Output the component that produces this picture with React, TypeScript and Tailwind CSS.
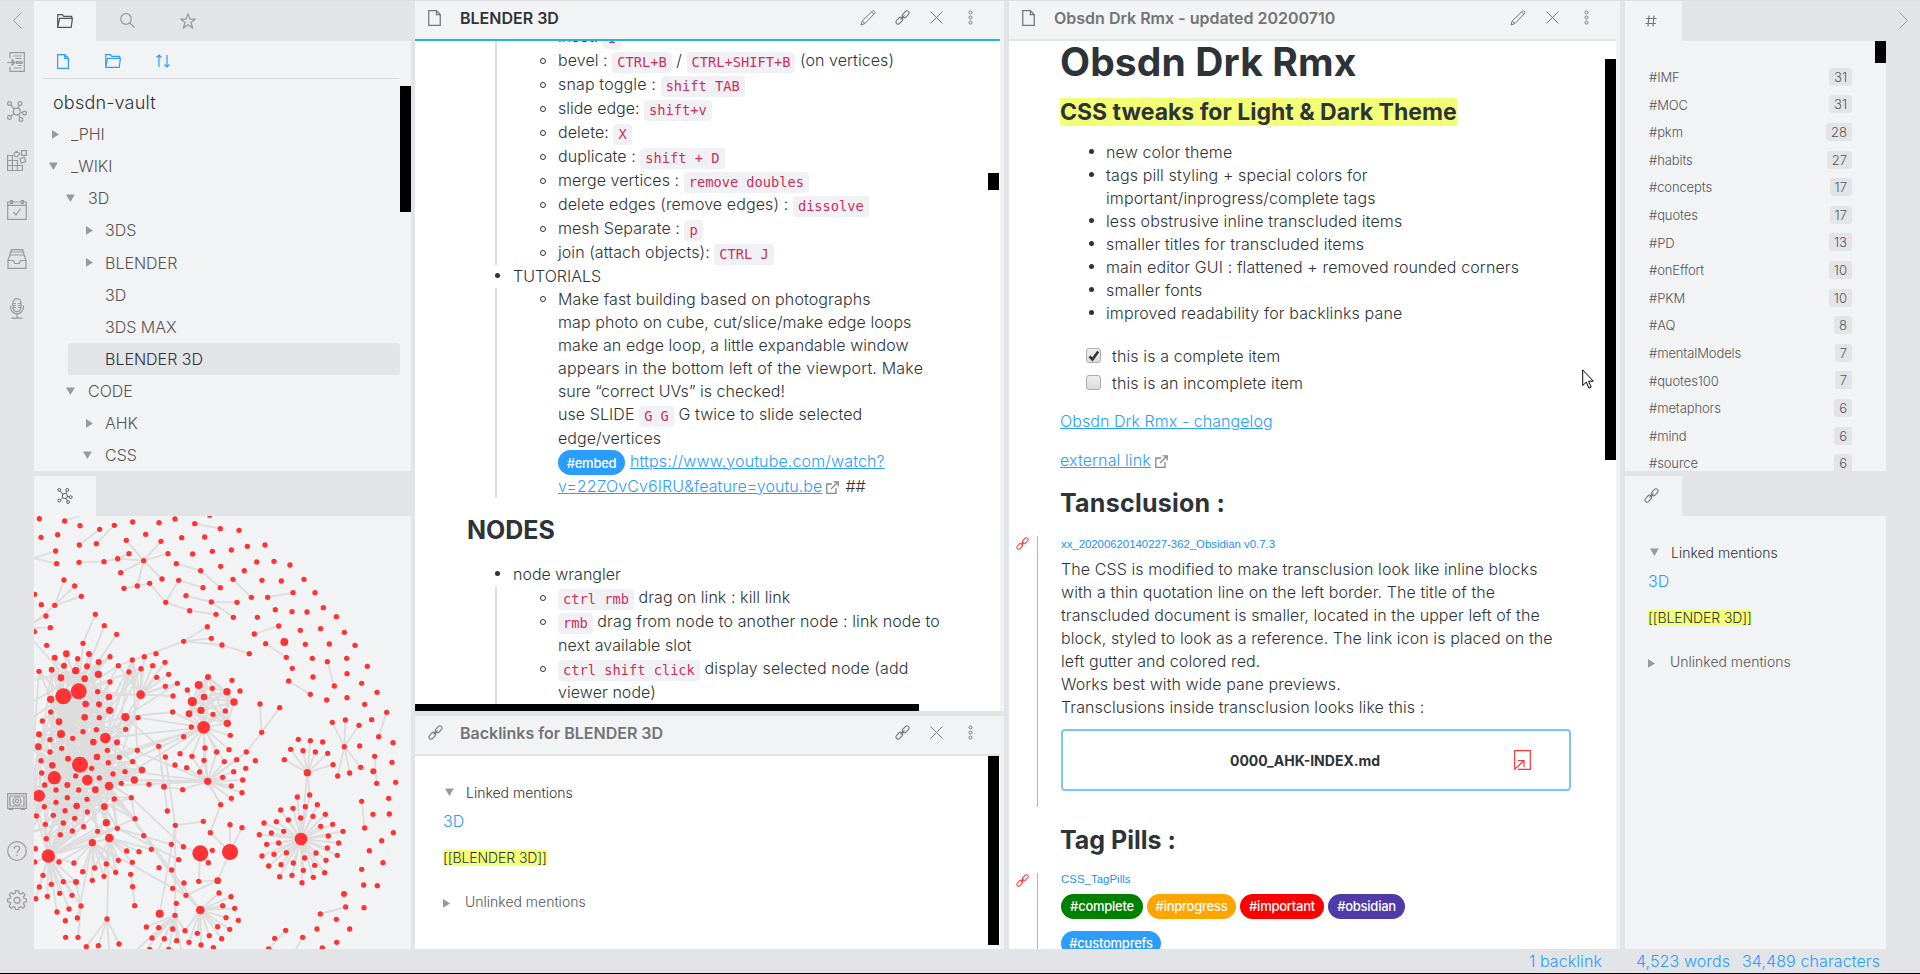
import React from "react";

/* ---------- icons ---------- */
type IconProps = { className?: string; children?: React.ReactNode; box?: string; sw?: number };
const Svg = ({ className = "", children, box = "0 0 20 20", sw = 1.2 }: IconProps) => (
  <svg viewBox={box} className={`block shrink-0 ${className}`} fill="none" stroke="currentColor" strokeWidth={sw}>
    {children}
  </svg>
);
const FolderIcon = ({ className = "" }) => (
  <Svg className={className} box="0 0 16 14">
    <path d="M.7 13.3V.7h4.8l1.2 1.6h8v2M.7 13.3 2.6 4.4h12.8l-1.2 8.9z" />
  </Svg>
);
const FileIcon = ({ className = "" }) => (
  <Svg className={className} box="0 0 12 15">
    <path d="M.6.6h7.2l3.6 3.7v10.1H.6zM7.8.6v3.7h3.6" />
  </Svg>
);
const LinkIcon = ({ className = "" }) => (
  <Svg className={className} box="0 0 15 15" sw={1.1}>
    <rect x="-3.9" y="-2.1" width="7.8" height="4.2" rx="2.1" transform="translate(10.7 4.3) rotate(-48)" />
    <rect x="-3.9" y="-2.1" width="7.8" height="4.2" rx="2.1" transform="translate(4.3 10.7) rotate(-48)" />
    <path d="M5.5 9.5l4-4" />
  </Svg>
);
const PencilIcon = ({ className = "" }) => (
  <Svg className={className} box="0 0 16 16" sw={1}>
    <path d="M1 15l1.2-4L12.6.9c.8-.8 3 1.300 2.300 2.200L5 13.500zM2.200 11l2.800 2.500M11.500 2l2.500 2.400" />
  </Svg>
);
const CrossIcon = ({ className = "" }) => (
  <Svg className={className} box="0 0 13 13" sw={1}>
    <path d="M.5.5l12 12M12.500.5l-12 12" />
  </Svg>
);
const DotsIcon = ({ className = "" }) => (
  <Svg className={className} box="0 0 5 15" sw={1}>
    <circle cx="2.5" cy="2.4" r="1.500" />
    <circle cx="2.5" cy="7.500" r="1.500" />
    <circle cx="2.5" cy="12.600" r="1.500" />
  </Svg>
);
const GraphIcon = ({ className = "" }) => (
  <Svg className={className} box="0 0 20 21">
    <circle cx="9.800" cy="10.500" r="3.400" />
    <circle cx="2.500" cy="2.500" r="1.900" />
    <circle cx="13" cy="2.500" r="1.900" />
    <circle cx="17.500" cy="12" r="1.900" />
    <circle cx="14" cy="18.500" r="1.900" />
    <circle cx="2.500" cy="16.500" r="1.900" />
    <path d="M3.900 4l3.400 4M12.300 4.300l-1.200 3M13.200 11l2.400.6M11.300 13.600l1.700 3M4 15.300l3.200-2.600" />
  </Svg>
);
const ExternalIcon = ({ className = "" }) => (
  <Svg className={className} box="0 0 13 13" sw={1.3}>
    <path d="M6 3H.8v9.300H10V7M7.500.8h4.700v4.700M12 1L5 8" />
  </Svg>
);
const Tri = ({ open, className = "" }: { open?: boolean; className?: string }) => (
  <svg viewBox="0 0 9 9" className={`block size-[9px] shrink-0 ${className}`} fill="#999">
    <path d={open ? "M0 .5h8.800L4.400 8z" : "M1 0l7 4.400L1 8.800z"} />
  </svg>
);

const ribbonTop = [
  <Svg className="size-5">
    <path d="M3 6V.7h14.300v18.600H3V15M6.500 4h8M8.500 6.500h6M6.500 16h8M11 13.500h3.500M0 10.500h7M5 7.800l3 2.700-3 2.700zM9.500 9.500h2v2h-2zM13 9.500h2v2h-2z" />
  </Svg>,
  <GraphIcon className="h-[21px] w-5" />,
  <Svg className="h-[21px] w-5" box="0 0 20 21">
    <path d="M.6 5.500h4.800v15H.6zM.6 10.500h9.800v10M.6 15.500h14.800v5H.6M10.400 15.500v-5M7 3.600L9.500 1.200l3.200 2.400-2.400 3.200-2.900-.8zM14.500.7h4.900v4.700h-4.900zM12.800 8.500l4.600-1.200 1.200 4.500-4.600 1.300z" />
  </Svg>,
  <Svg className="size-5">
    <path d="M.7 2h18.600v17.300H.7zM.7 5.300h18.600M3.500.5h2v3h-2zM14.500.5h2v3h-2zM6.500 12l2.500 3 4.500-6.500" />
  </Svg>,
  <Svg className="size-5">
    <path d="M1 11.500h5.500l1.200 3h4.600l1.200-3H19v7.800H1zM1 11.500L2.800 6h14.400l1.800 5.500M3.300 5.500V3h13.400v2.500M4.300 2.500V.7h11.400v1.800" />
  </Svg>,
  <Svg className="h-[21px] w-5" box="0 0 20 21">
    <rect x="6" y=".7" width="8" height="13" rx="4" />
    <path d="M3.700 7.500v2.300a6.300 6 0 0 0 12.600 0V7.500M10 16v3.500M4.500 20.200h11M6 5.500h3M11 5.500h3M6 7.500h3M11 7.500h3M6 9.500h3M11 9.500h3" />
  </Svg>,
];
const ribbonBottom = [
  <Svg className="h-[17px] w-5" box="0 0 20 17">
    <path d="M.7.7h18.600v14.600H.7zM3 3h14v10H3zM2.500 15.500v1h3v-1M14.500 15.500v1h3v-1" />
    <circle cx="10" cy="8" r="4" />
    <circle cx="10" cy="8" r="1.700" />
  </Svg>,
  <Svg className="size-5">
    <circle cx="10" cy="10" r="9.300" />
    <path d="M7.300 7.800c0-3.800 5.400-3.600 5.400-.3 0 2-2.700 2.300-2.700 4.500M10 13.500v1.600" />
  </Svg>,
  <Svg className="size-5">
    <path d="M8.400.8h3.200l.4 2.500 1.700.8 2.200-1.600 2.100 2.200-1.500 2.100.7 1.700 2.300.4v2.900l-2.400.5-.7 1.600 1.500 2.200-2.100 2.100-2.200-1.500-1.600.7-.5 2.300H8.500l-.5-2.400-1.600-.6-2.200 1.500-2.100-2.100 1.500-2.200-.7-1.600-2.300-.5V8.900l2.400-.4.700-1.700-1.500-2.100 2.100-2.200 2.100 1.600 1.600-.8z" />
    <circle cx="10" cy="10.300" r="3" />
  </Svg>,
];

/* ---------- graph ---------- */
type P = [number, number, number?];
const hubs: Record<string, P> = {
  a: [190, 679, 24], b: [236, 664, 24], c: [316, 804, 16], d: [240, 884, 24], e: [163, 923, 20], f: [262, 930, 16],
  g: [117, 977, 18], h: [145, 1158, 20], i: [422, 674, 13], j: [611, 772, 19], k: [577, 695, 14], l: [623, 934, 11],
  m: [601, 1150, 24], n: [690, 1146, 24], o: [903, 1107, 19], p: [922, 908, 11], q: [601, 1320, 13], r: [479, 1331, 12],
  s: [328, 1104, 13], t: [277, 1118, 11], u: [431, 272, 8], v: [1033, 830, 8], w: [327, 948, 13], x: [376, 741, 12],
  y: [853, 516, 12], z: [525, 1336, 8],
};
const small =
  "118,146 194,153 240,167 299,178 343,166 398,156 477,158 525,147 584,161 661,176 717,181 629,136 123,202 173,194 238,225 289,221 379,211 437,193 483,214 545,203 614,201 742,229 795,225 167,243 170,281 237,277 312,275 353,266 387,251 504,251 578,252 637,244 694,240 770,276 822,274 870,285 362,308 529,281 602,302 662,289 733,302 486,327 372,355 412,348 449,340 536,331 609,353 661,353 699,328 786,331 844,333 912,328 192,330 224,348 244,379 164,406 104,373 124,404 138,438 151,473 497,397 558,377 634,396 711,397 754,382 803,382 879,368 945,368 569,422 648,433 700,442 772,442 826,419 876,425 921,426 970,413 1009,440 286,433 313,467 350,493 249,520 622,470 634,505 551,514 666,525 748,551 763,492 836,468 901,481 962,476 1033,487 797,521 859,562 916,523 988,522 1065,526 937,565 982,575 1040,565 1102,589 877,595 866,633 931,673 939,621 1003,648 1041,611 1085,640 1131,667 980,690 1041,683 1094,703 1160,727 997,757 1036,750 1077,766 1115,749 1136,800 1079,828 1082,892 1049,909 1013,918 1179,818 1124,859 1130,940 1176,877 1187,937 1166,985 1085,994 1119,1033 1168,1032 1094,1074 1180,1088 1145,1112 1108,1142 1149,1178 1085,1198 1091,1245 1132,1247 1092,1313 1037,1311 961,1332 1009,1348 1049,1377 951,1377 1010,1417 908,1402 857,1381 824,1405 967,1434 806,1437 780,702 839,713 785,787 140,526 330,560 355,587 387,606 397,570 433,560 468,551 458,587 495,577 423,596 506,613 470,622 496,649 532,640 519,678 562,660 637,655 696,631 720,663 676,723 639,733 518,726 574,771 551,800 691,796 615,834 476,829 496,861 540,851 576,859 650,846 687,839 739,846 612,871 673,875 710,869 766,872 525,885 560,893 599,906 737,895 701,905 668,922 728,930 694,948 726,968 694,985 662,1004 548,959 117,604 330,636 293,665 152,726 127,753 298,743 414,743 377,778 249,785 289,779 218,805 150,809 185,835 150,846 322,841 358,862 325,878 412,841 398,875 275,895 227,918 298,924 339,912 375,905 364,940 447,943 394,983 343,987 261,988 202,983 168,960 134,945 236,960 168,997 133,1010 195,1022 109,1038 160,1036 224,1045 262,1026 136,1063 190,1059 251,1070 217,1083 293,1084 181,1094 139,1106 352,1075 405,1046 431,1097 380,1143 417,1145 454,1138 355,1171 397,1177 319,1182 347,1207 312,1219 284,1194 277,1231 248,1205 222,1179 177,1176 129,1216 154,1243 118,1251 142,1279 190,1235 179,1270 216,1276 207,1317 171,1326 243,1308 232,1344 196,1352 197,1402 234,1402 107,1286 104,1176 106,1136 259,1430 295,1427 321,1347 357,1422 392,1213 398,1250 404,1307 502,1023 526,1066 610,1054 631,1088 514,1123 550,1130 637,1141 625,1178 690,1064 726,1073 536,1169 477,1193 515,1200 518,1255 552,1239 558,1276 596,1234 529,1300 657,1269 693,1280 668,1307 704,1315 678,1343 715,1351 653,1370 689,1378 628,1397 592,1390 665,1406 603,1425 567,1417 640,1433 555,1382 518,1377 530,1412 476,1373 493,1406 456,1404 439,1371 449,1438 506,1438 895,808 931,812 968,816 872,838 909,842 946,846 983,850 853,869 999,884 892,981 929,975 842,1020 879,1015 916,1010 952,1004 829,1055 865,1050 902,1044 939,1039 976,1033 792,1059 998,1063 962,1069 814,1089 851,1084 778,1094 1029,1084 985,1098 800,1123 836,1119 1016,1119 982,1134 786,1158 822,1153 859,1148 948,1149 1012,1156 914,1164 978,1171 806,1188 843,1184 880,1179 944,1186 910,1201 974,1208 839,1220 876,1216 940,1222 906,1238 233,566 125,909 123,872 103,485";
const medium: P[] = [
  [164, 563, 9], [199, 551, 10], [267, 552, 9], [192, 587, 9], [155, 599, 9], [227, 602, 11], [261, 589, 9], [296, 576, 9],
  [295, 613, 11], [183, 623, 10], [254, 626, 10], [152, 688, 11], [327, 681, 10], [257, 702, 10], [297, 703, 9], [329, 721, 11],
  [254, 742, 10], [177, 755, 10], [183, 792, 12], [117, 793, 9], [115, 830, 10], [280, 816, 10], [351, 817, 9], [291, 861, 10],
  [204, 866, 9], [157, 886, 10], [426, 900, 10], [403, 930, 11], [286, 959, 10], [202, 945, 9], [230, 1008, 10], [313, 1010, 10],
  [319, 1058, 11], [492, 950, 9], [596, 645, 12], [624, 621, 9], [681, 665, 11], [612, 681, 10], [702, 696, 11], [603, 721, 11],
  [567, 731, 10], [682, 760, 11], [1120, 904, 9], [1032, 1272, 9], [653, 1232, 10], [228, 1236, 9],
];
const smallPts: P[] = small.split(" ").map((s) => s.split(",").map(Number) as unknown as P);
const lines =
  "194,153 240,138;299,178 238,225;343,166 289,221;584,161 661,176;237,277 312,275;312,275 353,266;353,266 387,251;353,266 431,272;379,211 431,272;483,214 431,272;504,251 431,272;362,308 431,272;486,327 431,272;412,348 431,272;372,355 412,348;412,348 449,340;449,340 497,397;497,397 536,331;536,331 609,353;497,397 569,422;569,422 648,433;529,281 602,302;602,302 661,353;558,377 634,396;634,396 711,397;634,396 700,442;699,328 754,382;803,382 879,368;167,243 102,265;170,281 102,265;192,330 164,406;224,348 164,406;244,379 164,406;164,406 102,458;138,438 102,458;151,473 102,474;286,433 249,520;249,520 236,664;313,467 236,664;350,493 236,664;622,470 551,514;634,505 551,514;551,514 666,525;666,525 748,551;551,514 355,587;763,492 836,468;797,521 859,562;866,633 931,673;982,575 1003,648;780,702 785,787;839,713 785,787;785,787 739,846;739,846 623,934;1160,727 1136,800;1124,859 1130,940;1085,994 1094,1074;1037,1311 961,1332;857,1381 806,1437;908,1402 888,1437;1033,830 997,757;1033,830 1036,750;1033,830 1077,766;1033,830 1013,918;1033,830 1049,909;1033,830 1082,892;922,908 903,1107;922,908 929,975;690,1146 690,1064;690,1146 726,1073;690,1146 631,1088;690,1146 653,1232;601,1150 550,1130;601,1150 625,1178;601,1150 596,1234;596,1234 653,1232;653,1232 558,1276;526,1066 610,1054;526,1066 479,1331;623,934 662,1004;662,1004 631,1088;502,1023 476,829;526,1066 496,861;492,950 476,829;398,1250 404,1307;392,1213 398,1250;394,983 550,1130;328,1104 321,1347;321,1347 259,1430;321,1347 295,1427;321,1347 357,1422;321,1347 327,1437;492,950 548,959;612,871 599,906;422,674 330,960;328,948 558,1276;328,948 601,1320;277,1118 558,1276;525,1336 412,1437;525,1336 440,1437;525,1336 476,1437;525,1336 543,1437;526,1066 525,1336;228,1236 243,1308;228,1236 190,1235;394,983 405,1046;352,1075 514,1123;352,1075 536,1169;328,1104 454,1138;277,1118 232,1344;243,1308 234,1402;104,630 236,600;102,740 190,679;102,515 236,664;102,960 230,1100";
const fan: [string, (p: P) => boolean][] = [
  ["o", (p) => Math.hypot(p[0] - 903, p[1] - 1107) < 138],
  ["p", (p) => Math.hypot(p[0] - 922, p[1] - 908) < 102 && p[1] < 890],
  ["q", (p) => Math.hypot(p[0] - 601, p[1] - 1320) < 118 && p[1] > 1260 && p[0] > 550],
  ["i", (p) => Math.hypot(p[0] - 422, p[1] - 674) < 130 && p[1] < 680 && p[0] > 350],
  ["l", (p) => Math.hypot(p[0] - 623, p[1] - 934) < 110 && p[0] > 540],
  ["j", (p) => Math.hypot(p[0] - 611, p[1] - 772) < 125],
  ["h", (p) => p[0] < 245 && p[1] > 1160 && p[1] < 1330],
  ["t", (p) => Math.hypot(p[0] - 277, p[1] - 1118) < 118 && p[1] > 1150],
  ["s", (p) => Math.hypot(p[0] - 328, p[1] - 1104) < 125 && p[1] > 1130],
  ["z", (p) => Math.hypot(p[0] - 515, p[1] - 1370) < 90 && p[1] > 1290 && p[0] < 560],
  ["b", (p) => Math.hypot(p[0] - 236, p[1] - 664) < 130],
  ["d", (p) => p[0] < 430 && p[1] > 690 && p[1] < 1110],
];

function GraphView() {
  const all: P[] = [...smallPts, ...medium];
  const dense = [...all, ...Object.values(hubs)].filter((p) => p[0] < 430 && p[1] > 540 && p[1] < 1110);
  const segs: number[][] = lines.split(";").map((s) => s.split(/[ ,]/).map(Number));
  fan.forEach(([k, test]) => all.filter(test).forEach((p) => segs.push([hubs[k][0], hubs[k][1], p[0], p[1]])));
  const centres = ["a", "b", "c", "d", "e", "f", "g", "w"];
  dense.forEach((p, i) => {
    [i % 8, (i * 3 + 1) % 8].forEach((n) => {
      const q = hubs[centres[n]];
      segs.push([p[0], p[1], q[0], q[1]]);
    });
    const r = dense[(i * 37 + 11) % dense.length];
    if (i % 2 && Math.hypot(p[0] - r[0], p[1] - r[1]) < 300) segs.push([p[0], p[1], r[0], r[1]]);
    if (i % 5 === 0) segs.push([p[0], p[1], 90, 700 + ((i * 53) % 400)]);
  });
  dense.forEach((p) => p[1] > 1000 && segs.push([p[0], p[1], 145, 1158]));
  const ring = medium.filter((p) => p[0] > 560 && p[0] < 710 && p[1] < 770);
  ring.forEach((p, i) => ring.slice(i + 1).forEach((r) => segs.push([p[0], p[1], r[0], r[1]])));
  ["c", "d", "w", "f", "e"].forEach((k) => segs.push([hubs[k][0], hubs[k][1], 611, 772], [hubs[k][0], hubs[k][1], 623, 934]));
  segs.push([376, 741, 518, 726], [376, 741, 532, 640], [376, 741, 476, 829], [376, 741, 422, 674], [414, 743, 611, 772]);
  return (
    <svg viewBox="102 138 1131 1299" className="block h-[433px] w-[377px]">
      <g stroke="#dddddd" strokeWidth="5.500">
        {segs.map((s, i) => (
          <line key={i} x1={s[0]} y1={s[1]} x2={s[2]} y2={s[3]} />
        ))}
      </g>
      <g fill="#ff3333">
        {[...all, ...Object.values(hubs)].map((p, i) => (
          <circle key={i} cx={p[0]} cy={p[1]} r={p[2] ?? 8} />
        ))}
      </g>
    </svg>
  );
}

/* ---------- text parts ---------- */
const Code = ({ children }: { children: React.ReactNode }) => (
  <code className="inline-block h-[21px] rounded-[4px] bg-[#f1f1f5] px-[5px] align-middle font-['DejaVu_Sans_Mono',monospace] text-[13.7px] leading-[21px] tracking-normal text-[#cc3058]">
    {children}
  </code>
);
const Pill = ({ children, className }: { children: React.ReactNode; className: string }) => (
  <span className={`inline-flex h-[25px] items-center justify-center rounded-full text-[13px] font-medium tracking-[-0.25px] text-white ${className}`}>{children}</span>
);
const Sub = ({ children, h = "h-6", dot = true, track = "tracking-[0.07px]" }: { children: React.ReactNode; h?: string; dot?: boolean; track?: string }) => (
  <div className={`flex items-center whitespace-pre ${h} ${track}`}>
    <span className="ml-[43px] mr-[11px] flex size-[7px] shrink-0 items-center">
      {dot && <span className="size-[6px] rounded-full border border-[#2e3338]" />}
    </span>
    <div className="leading-[22px]">{children}</div>
  </div>
);
const row = "h-[23px] pb-[2px]";
const Top = ({ children }: { children: React.ReactNode }) => (
  <div className="flex h-[23px] items-center whitespace-pre pb-[2px]">
    <span className="ml-[80px] mr-[13px] size-[5px] rounded-full bg-[#2e3338]" />
    {children}
  </div>
);
const Mentions = ({ className = "" }) => (
  <div className={`text-[14px] ${className}`}>
    <div className="flex h-5 items-center">
      <Tri open className="ml-[2px] mr-[12px]" />
      <span className="text-[#2e3338]">Linked mentions</span>
    </div>
    <div className="mt-[9px] flex h-5 items-center text-base text-[#2a9dff]">3D</div>
    <div className="mt-[19px] flex h-[17px]">
      <span className="h-4 bg-[#f4ff78] leading-[16px] tracking-[-0.1px] text-[#2e3338]">[[BLENDER 3D]]</span>
    </div>
    <div className="mt-[24px] flex h-5 items-center text-[#555]">
      <Tri className="mr-[14px] mt-[5px] -ml-px" />
      <span>Unlinked mentions</span>
    </div>
  </div>
);
const tree: [string, number, string, string][] = [
  ["_PHI", 0, "closed", "ml-[17px]"],
  ["_WIKI", 0, "open", "ml-[15px]"],
  ["3D", 1, "open", "ml-[32px]"],
  ["3DS", 2, "closed", "ml-[51px]"],
  ["BLENDER", 2, "closed", "ml-[51px]"],
  ["3D", 2, "", ""],
  ["3DS MAX", 2, "", ""],
  ["BLENDER 3D", 2, "active", ""],
  ["CODE", 1, "open", "ml-[32px]"],
  ["AHK", 2, "closed", "ml-[51px]"],
  ["CSS", 2, "open", "ml-[49px]"],
];
const indent = ["pl-[37px]", "pl-[54px]", "pl-[71px]"];
const tags: [string, number][] = [
  ["#IMF", 31], ["#MOC", 31], ["#pkm", 28], ["#habits", 27], ["#concepts", 17], ["#quotes", 17], ["#PD", 13], ["#onEffort", 10],
  ["#PKM", 10], ["#AQ", 8], ["#mentalModels", 7], ["#quotes100", 7], ["#metaphors", 6], ["#mind", 6], ["#source", 6],
];
const features = [
  "new color theme", "tags pill styling + special colors for", "important/inprogress/complete tags",
  "less obstrusive inline transcluded items", "smaller titles for transcluded items",
  "main editor GUI : flattened + removed rounded corners", "smaller fonts", "improved readability for backlinks pane",
];
const transcluded = [
  "The CSS is modified to make transclusion look like inline blocks", "with a thin quotation line on the left border. The title of the",
  "transcluded document is smaller, located in the upper left of the", "block, styled to look as a reference. The link icon is placed on the",
  "left gutter and colored red.", "Works best with wide pane previews.", "Transclusions inside transclusion looks like this :",
];

function LeftSidebar() {
  return (
    <aside className="flex w-[377px] shrink-0 flex-col">
      <div className="flex h-10">
        <div className="flex w-[62px] items-center justify-center bg-[#f2f3f5] pb-px text-[#555]"><FolderIcon className="h-[14px] w-4" /></div>
        <div className="flex w-[62px] items-center justify-center pb-px text-[#999]">
          <Svg className="size-[15px]" box="0 0 15 15"><circle cx="6" cy="6" r="5.300" /><path d="M9.800 9.800l4.700 4.700" /></Svg>
        </div>
        <div className="flex w-[60px] items-center justify-center pb-px text-[#999]">
          <Svg className="size-4" box="0 0 16 16"><path d="M8 .9l1.900 5.200h5.400l-4.300 3.300 1.600 5.600L8 11.700 3.400 15 5 9.400.7 6.100h5.400z" /></Svg>
        </div>
      </div>
      <div className="relative h-[430px] overflow-hidden bg-[#f2f3f5]">
        <div className="ml-[9px] mr-3 flex h-[38px] items-center border-b border-[#dadbde] pl-[14px] pt-[3px] text-[#2a9dff]">
          <FileIcon className="h-[15px] w-3" />
          <FolderIcon className="ml-9 h-[14px] w-4" />
          <Svg className="ml-[35px] h-[14px] w-[14px]" box="0 0 14 14"><path d="M3 13V1M.5 3.500L3 1l2.500 2.500M11 1v12M8.500 10.500L11 13l2.500-2.500" /></Svg>
        </div>
        <div className="mt-[13px] h-[22px] pl-[19px] text-[18px] leading-[22px] tracking-[0.2px] text-[#2e3338]">obsdn-vault</div>
        <div className="mt-[4px] text-base text-[#555]">
          {tree.map(([name, lvl, state, ml], i) => (
            <div key={i} className="relative flex h-[32.150px] items-center">
              {state === "active" && <div className="absolute inset-y-0 left-[34px] right-[11px] rounded-[3px] bg-[#e3e4e8]" />}
              {(state === "open" || state === "closed") && <Tri open={state === "open"} className={`absolute left-0 ${ml}`} />}
              <span className={`relative ${indent[lvl]} ${state === "active" ? "text-[#2e3338]" : ""}`}>{name}</span>
            </div>
          ))}
        </div>
        <div className="absolute right-0 top-[45px] h-[126px] w-[11px] bg-black" />
      </div>
      <div className="mt-[5px] flex h-10">
        <div className="flex w-[62px] items-center justify-center bg-[#f2f3f5] pb-px text-[#555]"><GraphIcon className="size-4" /></div>
      </div>
      <div className="h-[433px] overflow-hidden bg-[#f2f3f5]"><GraphView /></div>
    </aside>
  );
}

function PaneHeader({ icon, title, active, blue, edit, link }: { icon: React.ReactNode; title: string; active?: boolean; blue?: boolean; edit?: boolean; link?: boolean }) {
  return (
    <header className={`flex h-10 shrink-0 items-center border-b-2 bg-[#f2f3f5] pb-[5px] pl-[13px] pr-[27px] text-[#777] ${blue ? "border-[#1fb6e0]" : "border-[#e3e4e8]"}`}>
      <div className="flex w-[32px]">{icon}</div>
      <h2 className={`whitespace-pre text-base font-semibold ${active ? "text-[#2e3338]" : "text-[#737373]"}`}>{title}</h2>
      <div className="ml-auto flex items-center">
        {edit && <PencilIcon className={`size-4 ${link ? "mr-[19px]" : "mr-5"}`} />}
        {link && <LinkIcon className="mr-5 size-[15px]" />}
        <CrossIcon className="mr-[25px] size-[13px]" />
        <DotsIcon className="h-[15px] w-[5px]" />
      </div>
    </header>
  );
}

function MiddleColumn() {
  return (
    <div className="flex w-[589px] shrink-0 flex-col">
      <section className="relative h-[710px] overflow-hidden border-r-4 border-[#f2f3f5] bg-white">
        <PaneHeader icon={<FileIcon className="h-4 w-[13px]" />} title="BLENDER 3D" active blue edit link />
        <div className="h-[670px] overflow-hidden text-base text-[#2e3338]">
          <div className="-mt-4 ml-[80px] border-l-2 border-[#dddddd]">
            <Sub>inset: <Code>I</Code></Sub>
            <Sub>bevel : <Code>CTRL+B</Code> / <Code>CTRL+SHIFT+B</Code> (on vertices)</Sub>
            <Sub track="tracking-[0.15px]">snap toggle : <Code>shift TAB</Code></Sub>
            <Sub track="tracking-normal">slide edge: <Code>shift+v</Code></Sub>
            <Sub>delete: <Code>X</Code></Sub>
            <Sub>duplicate : <Code>shift + D</Code></Sub>
            <Sub>merge vertices : <Code>remove doubles</Code></Sub>
            <Sub track="tracking-[0.1px]">delete edges (remove edges) : <Code>dissolve</Code></Sub>
            <Sub>mesh Separate : <Code>p</Code></Sub>
            <Sub>join (attach objects): <Code>CTRL J</Code></Sub>
          </div>
          <Top>TUTORIALS</Top>
          <div className="ml-[80px] border-l-2 border-[#dddddd]">
            <Sub h={row} track="tracking-[0.12px]">Make fast building based on photographs</Sub>
            <Sub h={row} dot={false} track="tracking-[0.09px]">map photo on cube, cut/slice/make edge loops</Sub>
            <Sub h={row} dot={false}>make an edge loop, a little expandable window</Sub>
            <Sub h={row} dot={false} track="tracking-[0.2px]">appears in the bottom left of the viewport. Make</Sub>
            <Sub h={row} dot={false} track="tracking-[0.04px]">sure “correct UVs” is checked!</Sub>
            <Sub dot={false} track="tracking-[0.08px]">use SLIDE <Code>G G</Code> G twice to slide selected</Sub>
            <Sub h={row} dot={false}>edge/vertices</Sub>
            <Sub h="h-[25px]" dot={false}>
              <div className="flex items-center">
                <Pill className="mr-[5px] w-[67px] bg-[#2a9dff]">#embed</Pill>
                <a className="pb-[3px] tracking-[0.14px] text-[#2a9dff] underline">https://www.youtube.com/watch?</a>
              </div>
            </Sub>
            <Sub h={row} dot={false}>
              <div className="flex items-center">
                <a className="text-[#2a9dff] underline">v=22ZOvCv6IRU&amp;feature=youtu.be</a>
                <ExternalIcon className="ml-1 mr-[6px] mt-1 size-[13px] text-[#888]" />##
              </div>
            </Sub>
          </div>
          <h1 className="flex h-[65px] items-center pl-[52px] text-[25px] font-bold text-[#2e3338]">NODES</h1>
          <Top>node wrangler</Top>
          <div className="ml-[80px] border-l-2 border-[#dddddd]">
            <Sub><Code>ctrl rmb</Code> drag on link : kill link</Sub>
            <Sub track="tracking-[0.12px]"><Code>rmb</Code> drag from node to another node : link node to</Sub>
            <Sub h={row} dot={false}>next available slot</Sub>
            <Sub track="tracking-[0.14px]"><Code>ctrl shift click</Code> display selected node (add</Sub>
            <Sub h={row} dot={false}>viewer node)</Sub>
          </div>
          <div className="h-[7px] w-[504px] bg-black" />
        </div>
        <div className="absolute right-[1px] top-[172px] h-[17px] w-[11px] bg-black" />
      </section>
      <section className="relative mt-[5px] h-[233px] border-r-4 border-[#f2f3f5] bg-white">
        <PaneHeader icon={<LinkIcon className="size-[15px]" />} title="Backlinks for BLENDER 3D" link />
        <Mentions className="pl-7 pt-[26px]" />
        <div className="absolute right-[1px] top-10 h-[189px] w-[11px] bg-black" />
      </section>
    </div>
  );
}

const Check = ({ on }: { on?: boolean }) => (
  <span className="mr-[11px] flex size-[15px] items-center justify-center rounded-[3px] border border-[#adadad] bg-linear-to-b from-[#eeeeee] to-[#dcdcdc]">
    {on && (
      <svg viewBox="0 0 12 12" className="size-3" fill="none" stroke="#333" strokeWidth="2.600"><path d="M1.500 6.300l3 3.200 5.700-8" /></svg>
    )}
  </span>
);

function PreviewPane() {
  return (
    <section className="relative h-[948px] w-[611px] shrink-0 overflow-hidden border-r-4 border-[#f2f3f5] bg-white">
      <PaneHeader icon={<FileIcon className="h-4 w-[13px]" />} title="Obsdn Drk Rmx - updated 20200710" edit />
      <div className="pl-[51px] text-base tracking-[0.12px] text-[#2e3338]">
        <h1 className="h-[57px] whitespace-pre text-[39px] font-bold leading-[41px]">Obsdn Drk Rmx</h1>
        <h2 className="flex text-[23px] font-bold tracking-normal"><span className="h-[28px] whitespace-pre bg-[#f4ff78] leading-[28px]">CSS tweaks for Light &amp; Dark Theme</span></h2>
        <ul className="mt-[14px]">
          {features.map((f, i) => (
            <li key={f} className="flex h-[23px] items-center whitespace-pre">
              <span className={`ml-[29px] mr-3 size-[5px] rounded-full ${i === 2 ? "" : "bg-[#2e3338]"}`} />{f}
            </li>
          ))}
        </ul>
        <div className="mt-[18px] flex h-[27px] items-center pl-[26px]"><Check on />this is a complete item</div>
        <div className="flex h-[27px] items-center pl-[26px]"><Check />this is an incomplete item</div>
        <div className="mt-[13px] flex h-[23px] items-center"><a className="whitespace-pre tracking-[0.06px] text-[#2a9dff] underline">Obsdn Drk Rmx - changelog</a></div>
        <div className="mt-4 flex h-[23px] items-center">
          <a className="text-[#2a9dff] underline">external link</a><ExternalIcon className="ml-1 mt-1 size-[13px] text-[#888]" />
        </div>
        <h1 className="flex h-[65px] items-center text-[25px] font-bold tracking-[0.25px]">Tansclusion :</h1>
        <div className="-ml-[44px] flex">
          <LinkIcon className="mt-[1px] size-[13px] text-[#ff3333]" />
          <div className="ml-[8px] h-[271px] border-l border-[#7cc4ff] pl-[23px]">
            <div className="h-[21px] whitespace-pre font-['Liberation_Sans',sans-serif] text-[11.400px] leading-[16px] tracking-[-0.02px] text-[#1a90ff]">xx_20200620140227-362_Obsidian v0.7.3</div>
            {transcluded.map((t) => (
              <div key={t} className="flex h-[23px] items-center whitespace-pre tracking-[0.09px]">{t}</div>
            ))}
            <div className="mt-[11px] flex h-[62px] w-[510px] items-center rounded-[4px] border-2 border-[#7cc4ff] text-[14px] font-bold tracking-normal">
              <span className="w-[484px] text-center">0000_AHK-INDEX.md</span>
              <Svg className="-ml-[33px] h-[20px] w-[17px] text-[#ff3333]" box="0 0 17 20">
                <path d="M.7 14V.7h15.600v18.600H4M.7 14v5.300L9.500 11M4 10.500h6v6.500" />
              </Svg>
            </div>
          </div>
        </div>
        <h1 className="flex h-[66px] items-center whitespace-pre pt-[2px] text-[25px] font-bold tracking-normal">Tag Pills :</h1>
        <div className="-ml-[44px] flex">
          <LinkIcon className="mt-[1px] size-[13px] text-[#ff3333]" />
          <div className="ml-[8px] h-[90px] border-l border-[#7cc4ff] pl-[23px]">
            <div className="h-[21px] font-['Liberation_Sans',sans-serif] text-[11.400px] leading-[13px] tracking-[0.05px] text-[#1a90ff]">CSS_TagPills</div>
            <div className="flex gap-1">
              <Pill className="w-[82px] bg-[#008000]">#complete</Pill>
              <Pill className="w-[89px] bg-[#ffa500]">#inprogress</Pill>
              <Pill className="w-[84px] bg-[#ff0000]">#important</Pill>
              <Pill className="w-[77px] bg-[#4f3aa8]">#obsidian</Pill>
            </div>
            <Pill className="mt-3 w-[100px] bg-[#2a9dff]">#customprefs</Pill>
          </div>
        </div>
      </div>
      <div className="absolute right-0 top-[58px] h-[401px] w-[11px] bg-black" />
      <svg viewBox="0 0 12 20" className="absolute left-[573px] top-[368px] h-5 w-3" fill="#fff" stroke="#000">
        <path d="M.7.9v15.600l3.600-3.400 2.600 6 2.300-1-2.600-5.900h4.700z" />
      </svg>
    </section>
  );
}

function RightSidebar() {
  return (
    <aside className="flex w-[261px] shrink-0 flex-col">
      <div className="flex h-10">
        <div className="flex w-[57px] items-center justify-center bg-[#f2f3f5] pb-px pr-[5px] text-[#777]">
          <Svg className="size-3" box="0 0 12 12"><path d="M4 .5L3 11.500M9 .5L8 11.500M1 3.500h10.500M.5 8.500H11" /></Svg>
        </div>
      </div>
      <div className="relative h-[430px] overflow-hidden bg-[#f2f3f5] pl-6 pr-[34px] pt-[22px] text-[13px] text-[#555]">
        {tags.map(([t, n]) => (
          <div key={t} className="flex h-[27.600px] items-center justify-between">
            <span className="pt-[2px] tracking-[-0.1px]">{t}</span>
            <span className="h-[18px] rounded-[3px] bg-[#e3e4e8] px-[5px] leading-[18px]">{n}</span>
          </div>
        ))}
        <div className="absolute right-0 top-0 h-[22px] w-[11px] bg-black" />
      </div>
      <div className="mt-[5px] flex h-10">
        <div className="flex w-[57px] items-center justify-center bg-[#f2f3f5] pb-px pr-[5px] text-[#777]"><LinkIcon className="size-[15px]" /></div>
      </div>
      <div className="h-[433px] bg-[#f2f3f5]"><Mentions className="pl-[23px] pt-[26px]" /></div>
    </aside>
  );
}

export default function App() {
  return (
    <div className="flex h-[974px] w-[1920px] flex-col overflow-hidden border-b border-black bg-[#e3e4e8] font-['Inter',sans-serif] font-light">
      <div className="flex h-[949px] shrink-0 border-t border-[#dddee2]">
        <nav className="flex w-[34px] shrink-0 flex-col items-center text-[#999]">
          <Svg className="mt-[11px] h-[17px] w-[9px]" box="0 0 9 17" sw={1}><path d="M8.500.5l-8 8 8 8" /></Svg>
          <div className="mt-[8px] flex flex-col">
            {ribbonTop.map((icon, i) => (
              <div key={i} className="flex h-[49.400px] items-center">{icon}</div>
            ))}
          </div>
          <div className="mt-auto flex flex-col pb-[24px]">
            {ribbonBottom.map((icon, i) => (
              <div key={i} className="flex h-[49.400px] items-center">{icon}</div>
            ))}
          </div>
        </nav>
        <LeftSidebar />
        <div className="w-1 shrink-0" />
        <MiddleColumn />
        <div className="w-[5px] shrink-0" />
        <PreviewPane />
        <div className="w-[5px] shrink-0" />
        <RightSidebar />
        <div className="flex w-[34px] justify-center text-[#999]">
          <Svg className="mt-[11px] h-[17px] w-[9px]" box="0 0 9 17" sw={1}><path d="M.5.5l8 8-8 8" /></Svg>
        </div>
      </div>
      <footer className="flex h-6 items-center justify-end whitespace-pre pr-10 text-base tracking-[0.1px] text-[#2a9dff]">
        <span className="mr-[34px]">1 backlink</span>
        <span className="mr-3">4,523 words</span>
        <span>34,489 characters</span>
      </footer>
    </div>
  );
}
